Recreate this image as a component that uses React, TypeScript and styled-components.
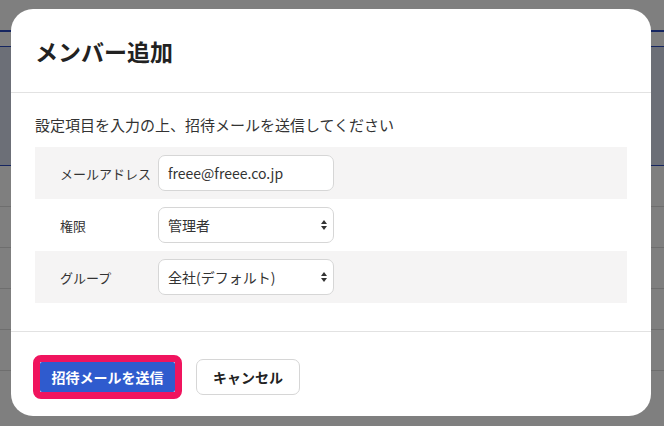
import React from "react";
import styled, { createGlobalStyle } from "styled-components";

const Global = createGlobalStyle`
  html, body { margin: 0; padding: 0; }
  body { font-family: "Noto Sans CJK JP", "Noto Sans", sans-serif; width: 664px; height: 426px; overflow: hidden; background: #fff; }
`;

const Page = styled.div`
  position: relative; width: 664px; height: 426px; overflow: hidden; background: #fff;
`;
const Tabs = styled.div`
  display: flex; gap: 40px; padding: 0 0 0 140px; height: 30px; align-items: flex-end;
  border-bottom: 2px solid #2b4bc1; font-size: 14px; font-weight: bold; color: #333;
`;
const Banner = styled.div`
  height: 118px; margin-top: 14px; background: #d8deee; border-top: 1px solid #2b4bc1; border-bottom: 1px solid #2b4bc1;
`;
const Rows = styled.div`
  div { height: 40px; border-bottom: 1px solid #ddd; }
`;
const Overlay = styled.div`
  position: absolute; inset: 0; background: rgba(0,0,0,0.5);
`;
const Modal = styled.div`
  position: absolute; left: 11px; top: 9px; width: 640px; height: 407px;
  background: #fff; border-radius: 22px; display: flex; flex-direction: column; overflow: hidden;
`;
const Header = styled.div`
  height: 84px; box-sizing: border-box; border-bottom: 1px solid #e2e2e2;
  display: flex; align-items: center; padding: 0 24px;
  font-size: 23px; font-weight: bold; color: #222;
`;
const Body = styled.div`
  padding: 22px 24px 0; border-bottom: 1px solid #e2e2e2; height: 239px; box-sizing: border-box;
`;
const Desc = styled.p`
  margin: 0 0 12px; font-size: 15px; color: #333; line-height: 20px;
`;
const Row = styled.div<{ $shade?: boolean }>`
  display: flex; align-items: center; height: 52px; background: ${p => p.$shade ? "#f5f4f4" : "#fff"};
`;
const Label = styled.div`
  width: 123px; padding-left: 25px; box-sizing: border-box; font-size: 13px; color: #333;
`;
const Field = styled.div`
  width: 176px; height: 36px; box-sizing: border-box; border: 1px solid #d6d6d6; border-radius: 7px;
  background: #fff; display: flex; align-items: center; padding: 0 6px 0 9px;
  font-size: 14px; color: #333; justify-content: space-between;
`;
const Footer = styled.div`
  flex: 1; display: flex; align-items: center; gap: 14px; padding: 0 22px; padding-top: 6px;
`;
const Focus = styled.div`
  border: 7px solid #f0145e; border-radius: 8px; display: flex;
`;
const Primary = styled.button`
  border: none; background: #2f5bce; color: #fff; font-weight: bold; font-size: 14px;
  height: 30px; width: 135px; font-family: inherit; border-radius: 2px;
`;
const Secondary = styled.button`
  background: #fff; border: 1px solid #d6d6d6; border-radius: 7px; height: 36px; width: 104px;
  font-weight: bold; font-size: 14px; color: #222; font-family: inherit;
`;

const Arrows = () => (
  <svg width="6" height="10" viewBox="0 0 6 10"><path d="M3 0L6 4H0z M3 10L6 6H0z" fill="#333" /></svg>
);

export default function App() {
  return (
    <Page>
      <Global />
      <Tabs><span>グループ管理</span><span>権限管理</span></Tabs>
      <Banner />
      <Rows><div /><div /><div /><div /><div /></Rows>
      <Overlay />
      <Modal>
        <Header>メンバー追加</Header>
        <Body>
          <Desc>設定項目を入力の上、招待メールを送信してください</Desc>
          <Row $shade><Label>メールアドレス</Label><Field>freee@freee.co.jp</Field></Row>
          <Row><Label>権限</Label><Field>管理者<Arrows /></Field></Row>
          <Row $shade><Label>グループ</Label><Field>全社(デフォルト)<Arrows /></Field></Row>
        </Body>
        <Footer>
          <Focus><Primary>招待メールを送信</Primary></Focus>
          <Secondary>キャンセル</Secondary>
        </Footer>
      </Modal>
    </Page>
  );
}
